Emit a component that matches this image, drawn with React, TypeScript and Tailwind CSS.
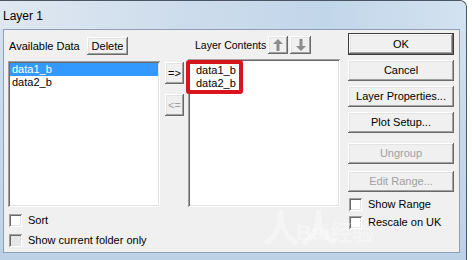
import React from "react";

const raised =
  "shadow-[inset_-1px_-1px_0_#696969,inset_1px_1px_0_#ffffff,inset_-2px_-2px_0_#a0a0a0,inset_2px_2px_0_#e3e3e3]";
const defaultRaised =
  "shadow-[inset_0_0_0_1px_#3c3c3c,inset_-2px_-2px_0_#696969,inset_2px_2px_0_#ffffff,inset_-3px_-3px_0_#a0a0a0,inset_3px_3px_0_#e3e3e3]";
const sunken =
  "shadow-[inset_1px_1px_0_#a0a0a0,inset_-1px_-1px_0_#ffffff,inset_2px_2px_0_#696969,inset_-2px_-2px_0_#e3e3e3]";

function Btn({
  label,
  disabled,
  isDefault,
  className,
}: {
  label: React.ReactNode;
  disabled?: boolean;
  isDefault?: boolean;
  className?: string;
}) {
  return (
    <div
      className={[
        "flex items-center justify-center bg-[#f0f0f0] text-[11px] leading-none",
        isDefault ? defaultRaised : raised,
        disabled ? "text-[#a0a0a0]" : "text-black",
        className ?? "",
      ].join(" ")}
    >
      {label}
    </div>
  );
}

function Check({ label, grey }: { label: string; grey?: boolean }) {
  return (
    <div className="flex items-center h-[13px]">
      <span
        className={[
          "w-[13px] h-[13px] shrink-0",
          grey ? "bg-[#e6e6e6]" : "bg-white",
          "shadow-[inset_1px_1px_0_#a0a0a0,inset_-1px_-1px_0_#ffffff,inset_2px_2px_0_#696969,inset_-2px_-2px_0_#e3e3e3]",
        ].join(" ")}
      />
      <span className="ml-[6px] text-[11px] leading-none text-black whitespace-nowrap">
        {label}
      </span>
    </div>
  );
}

function Arrow({ up }: { up?: boolean }) {
  return (
    <svg width="10" height="12" viewBox="0 0 10 12">
      <g transform={up ? undefined : "rotate(180 5 6)"}>
        <path d="M5 0 L10 5 L6.5 5 L6.5 12 L3.5 12 L3.5 5 L0 5 Z" fill="#8c8c8c" />
      </g>
    </svg>
  );
}

export default function App() {
  return (
    <div className="w-[472px] h-[260px] bg-white overflow-hidden font-['Liberation_Sans',Tahoma,sans-serif]">
      <div className="relative w-[467px] h-[260px] rounded-tr-[7px] border-r border-t border-[#4b5563] bg-gradient-to-b from-[#d6e3f0] via-[#c8d9eb] to-[#bdd1e6] flex flex-col">
        {/* title bar */}
        <div className="h-[28px] flex items-center pl-[3px] pt-[1px] bg-[linear-gradient(90deg,#dfe8f1_0%,#cddcec_40%,#c2d6ea_70%,#d3e2f0_100%)] rounded-tr-[7px]">
          <span className="text-[12px] text-black leading-none">Layer 1</span>
        </div>

        {/* client area */}
        <div className="ml-[3px] w-[457px] h-[224px] border border-[#8e9fb3] bg-[#f0f0f0] flex items-start">
          {/* left list column */}
          <div className="ml-[4px] w-[152px] flex flex-col">
            <div className="mt-[7px] h-[18px] flex items-center">
              <span className="w-[79px] pl-[1px] text-[11px] leading-none">Available Data</span>
              <Btn label="Delete" className="w-[41px] h-[18px]" />
            </div>
            <div className={`mt-[6px] h-[146px] bg-white ${sunken} p-[2px] text-[11px]`}>
              <div className="h-[13px] bg-[#3399ff] text-white pl-[2px] leading-[13px]">data1_b</div>
              <div className="h-[13px] pl-[2px] leading-[13px] text-black">data2_b</div>
            </div>
            <div className="mt-[7px] ml-[1px]">
              <Check label="Sort" />
            </div>
            <div className="mt-[7px] ml-[1px]">
              <Check label="Show current folder only" grey />
            </div>
          </div>

          {/* move buttons */}
          <div className="ml-[5px] w-[19px] flex flex-col">
            <Btn label="=>" className="mt-[32px] h-[22px]" />
            <Btn label="<=" disabled className="mt-[10px] h-[22px]" />
          </div>

          {/* right list column */}
          <div className="ml-[4px] w-[152px] flex flex-col">
            <div className="mt-[6px] h-[18px] flex items-center">
              <span className="ml-[7px] w-[73px] text-[10.5px] leading-none whitespace-nowrap">Layer Contents</span>
              <Btn label={<Arrow up />} className="w-[20px] h-[18px]" />
              <Btn label={<Arrow />} className="ml-[2px] w-[21px] h-[18px]" />
            </div>
            <div className={`relative mt-[5px] h-[148px] bg-white ${sunken} pt-[5px] pl-[8px] text-[11px]`}>
              <div className="h-[13px] leading-[13px]">data1_b</div>
              <div className="h-[13px] leading-[13px]">data2_b</div>
              <div className="absolute left-[-2px] top-[1px] w-[57px] h-[34px] border-[4px] border-[#d9141c] rounded-[3px]" />
            </div>
          </div>

          {/* action buttons */}
          <div className="ml-[8px] w-[106px] flex flex-col">
            <Btn label="OK" isDefault className="mt-[3px] h-[22px]" />
            <Btn label="Cancel" className="mt-[5px] h-[21px]" />
            <Btn label="Layer Properties..." className="mt-[5px] h-[21px]" />
            <Btn label="Plot Setup..." className="mt-[5px] h-[21px]" />
            <Btn label="Ungroup" disabled className="mt-[10px] h-[21px]" />
            <Btn label="Edit Range..." disabled className="mt-[7px] h-[21px]" />
            <div className="mt-[6px] ml-[1px]">
              <Check label="Show Range" />
            </div>
            <div className="mt-[5px] ml-[1px]">
              <Check label="Rescale on UK" />
            </div>
          </div>
        </div>

        {/* watermark */}
        <div className="absolute left-[262px] top-[206px] text-[38px] font-bold leading-none text-white/40 font-['Noto_Sans_CJK_SC',sans-serif] pointer-events-none">
          人人
        </div>
        <div className="absolute left-[296px] top-[218px] text-[22px] font-bold leading-none text-white/40 pointer-events-none">
          Bai<span className="font-['Noto_Sans_CJK_SC',sans-serif]">经验</span>
        </div>
      </div>
    </div>
  );
}
